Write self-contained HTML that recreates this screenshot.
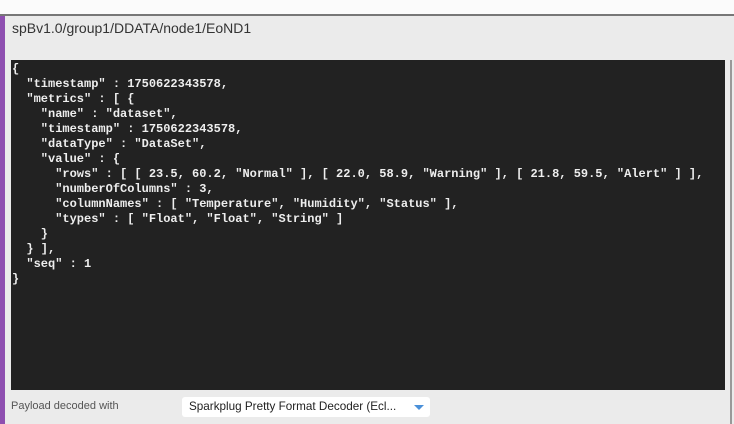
<!DOCTYPE html>
<html><head><meta charset="utf-8"><style>
body{margin:0;width:734px;height:424px;overflow:hidden;background:#ebebeb;position:relative;font-family:"Liberation Sans",sans-serif}
.top{position:absolute;left:0;top:0;width:734px;height:14px;background:#fbfbfb;border-bottom:2px solid #777}
.purple{position:absolute;left:0;top:16px;width:5px;height:408px;background:#8e4fb0}
.topic{position:absolute;left:12px;top:20px;font-size:14px;color:#333}
.code{position:absolute;left:11px;top:60px;width:714px;height:330px;background:#222;margin:0;padding:0}
pre{margin:0;position:absolute;left:1px;top:2px;font-family:"Liberation Mono",monospace;font-weight:bold;font-size:12px;line-height:15px;color:#eee}
.sb{position:absolute;left:730px;top:60px;width:2px;height:364px;background:#999}
.lbl{position:absolute;left:11px;top:400px;font-size:11px;color:#555}
.sel{position:absolute;left:182px;top:397px;width:248px;height:20px;background:#fff;border-radius:3px;font-size:11.7px;color:#222;line-height:20px;padding-left:7px;box-sizing:border-box}
.arr{position:absolute;right:6px;top:8px;width:0;height:0;border-left:5px solid transparent;border-right:5px solid transparent;border-top:5px solid #4a90d9}
</style></head><body>
<div class="top"></div>
<div class="purple"></div>
<div class="topic">spBv1.0/group1/DDATA/node1/EoND1</div>
<div class="code"><pre>{
  "timestamp" : 1750622343578,
  "metrics" : [ {
    "name" : "dataset",
    "timestamp" : 1750622343578,
    "dataType" : "DataSet",
    "value" : {
      "rows" : [ [ 23.5, 60.2, "Normal" ], [ 22.0, 58.9, "Warning" ], [ 21.8, 59.5, "Alert" ] ],
      "numberOfColumns" : 3,
      "columnNames" : [ "Temperature", "Humidity", "Status" ],
      "types" : [ "Float", "Float", "String" ]
    }
  } ],
  "seq" : 1
}</pre></div>
<div class="sb"></div>
<div class="lbl">Payload decoded with</div>
<div class="sel">Sparkplug Pretty Format Decoder (Ecl...<div class="arr"></div></div>
</body></html>
